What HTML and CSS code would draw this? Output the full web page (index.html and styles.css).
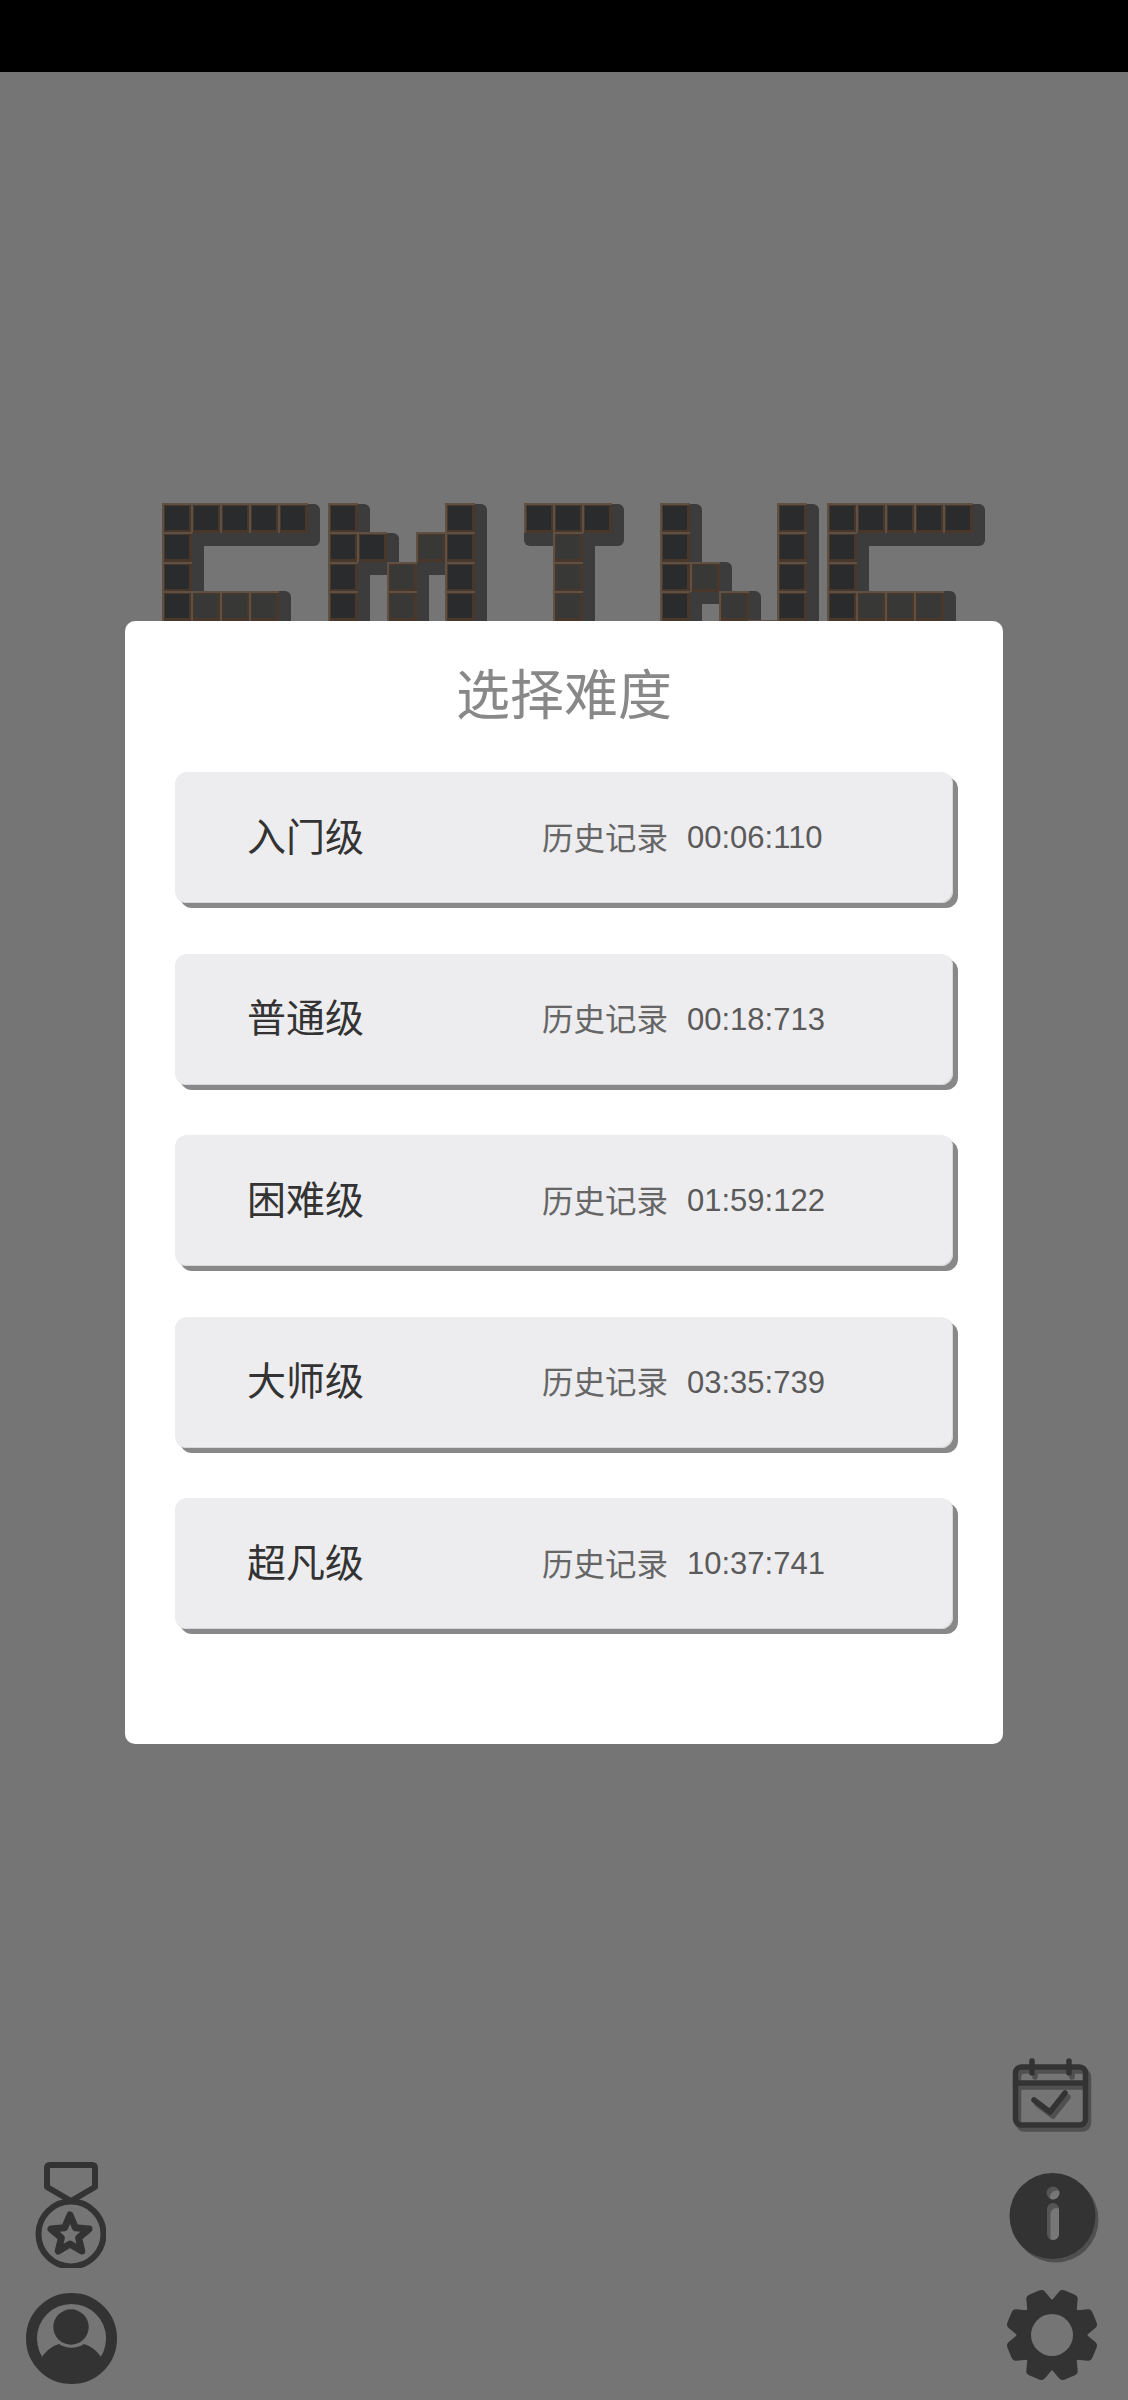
FILE: index.html
```html
<!DOCTYPE html>
<html lang="zh-CN">
<head>
<meta charset="utf-8">
<title>选择难度</title>
<link rel="stylesheet" href="styles.css">
</head>
<body>
<div class="status"></div>
<main class="stage">
  <svg class="logo" width="1128" height="560" viewBox="0 72 1128 560">
    <defs>
      <rect id="s" width="42" height="42" rx="6" fill="#3c3c3c"/>
      <g id="t"><rect width="30" height="30" fill="#48372a"/><path d="M0 0h30v2H2v28H0z" fill="#5f5044"/><rect x="3" y="3" width="24" height="24" fill="#2a2b2d"/></g>
      <g id="l"><rect width="30" height="30" fill="#48372a"/><path d="M0 0h30v2H2v28H0z" fill="#5f5044"/><rect x="3" y="3" width="24" height="24" fill="#383837"/></g>
    </defs>
    <g>
      <use href="#s" x="162" y="504"/><use href="#s" x="191" y="504"/><use href="#s" x="220" y="504"/><use href="#s" x="249" y="504"/><use href="#s" x="278" y="504"/>
      <use href="#s" x="162" y="533"/><use href="#s" x="162" y="562"/><use href="#s" x="162" y="591"/><use href="#s" x="191" y="591"/><use href="#s" x="220" y="591"/><use href="#s" x="249" y="591"/>
      <use href="#s" x="328" y="504"/><use href="#s" x="328" y="533"/><use href="#s" x="328" y="562"/><use href="#s" x="328" y="591"/>
      <use href="#s" x="357" y="533"/><use href="#s" x="387" y="562"/><use href="#s" x="387" y="591"/><use href="#s" x="416" y="533"/>
      <use href="#s" x="445" y="504"/><use href="#s" x="445" y="533"/><use href="#s" x="445" y="562"/><use href="#s" x="445" y="591"/>
      <use href="#s" x="524" y="504"/><use href="#s" x="553" y="504"/><use href="#s" x="582" y="504"/><use href="#s" x="553" y="533"/><use href="#s" x="553" y="562"/><use href="#s" x="553" y="591"/>
      <use href="#s" x="660" y="504"/><use href="#s" x="660" y="533"/><use href="#s" x="660" y="562"/><use href="#s" x="660" y="591"/><use href="#s" x="690" y="562"/><use href="#s" x="719" y="591"/>
      <use href="#s" x="777" y="504"/><use href="#s" x="777" y="533"/><use href="#s" x="777" y="562"/><use href="#s" x="777" y="591"/>
      <use href="#s" x="827" y="504"/><use href="#s" x="856" y="504"/><use href="#s" x="885" y="504"/><use href="#s" x="914" y="504"/><use href="#s" x="943" y="504"/>
      <use href="#s" x="827" y="533"/><use href="#s" x="827" y="562"/><use href="#s" x="827" y="591"/><use href="#s" x="856" y="591"/><use href="#s" x="885" y="591"/><use href="#s" x="914" y="591"/>
    </g>
    <g class="tiles">
      <use href="#t" x="162" y="503"/><use href="#t" x="191" y="503"/><use href="#t" x="220" y="503"/><use href="#t" x="249" y="503"/><use href="#t" x="278" y="503"/>
      <use href="#t" x="162" y="532"/><use href="#t" x="162" y="562"/><use href="#t" x="162" y="591"/><use href="#l" x="191" y="591"/><use href="#l" x="220" y="591"/><use href="#l" x="249" y="591"/>
      <use href="#t" x="328" y="503"/><use href="#t" x="328" y="532"/><use href="#t" x="328" y="562"/><use href="#t" x="328" y="591"/>
      <use href="#t" x="357" y="532"/><use href="#l" x="387" y="562"/><use href="#l" x="387" y="591"/><use href="#l" x="416" y="532"/>
      <use href="#t" x="445" y="503"/><use href="#t" x="445" y="532"/><use href="#t" x="445" y="562"/><use href="#t" x="445" y="591"/>
      <use href="#t" x="524" y="503"/><use href="#t" x="553" y="503"/><use href="#t" x="582" y="503"/><use href="#l" x="553" y="532"/><use href="#l" x="553" y="562"/><use href="#l" x="553" y="591"/>
      <use href="#t" x="660" y="503"/><use href="#t" x="660" y="532"/><use href="#t" x="660" y="562"/><use href="#t" x="660" y="591"/><use href="#l" x="690" y="562"/><use href="#l" x="719" y="591"/><use href="#l" x="748" y="620"/>
      <use href="#t" x="777" y="503"/><use href="#t" x="777" y="532"/><use href="#t" x="777" y="562"/><use href="#t" x="777" y="591"/>
      <use href="#t" x="827" y="503"/><use href="#t" x="856" y="503"/><use href="#t" x="885" y="503"/><use href="#t" x="914" y="503"/><use href="#t" x="943" y="503"/>
      <use href="#t" x="827" y="532"/><use href="#t" x="827" y="562"/><use href="#t" x="827" y="591"/><use href="#l" x="856" y="591"/><use href="#l" x="885" y="591"/><use href="#l" x="914" y="591"/>
    </g>
  </svg>

  <section class="modal">
    <h1 class="title">选择难度</h1>
    <div class="levels">
      <div class="level"><span class="name">入门级</span><span class="rec">历史记录</span><span class="time">00:06:110</span></div>
      <div class="level"><span class="name">普通级</span><span class="rec">历史记录</span><span class="time">00:18:713</span></div>
      <div class="level"><span class="name">困难级</span><span class="rec">历史记录</span><span class="time">01:59:122</span></div>
      <div class="level"><span class="name">大师级</span><span class="rec">历史记录</span><span class="time">03:35:739</span></div>
      <div class="level"><span class="name">超凡级</span><span class="rec">历史记录</span><span class="time">10:37:741</span></div>
    </div>
  </section>

  <svg class="ico medal" width="72" height="108" viewBox="0 0 72 108" fill="none" stroke="#333" stroke-linejoin="round">
    <path d="M16 5h42q3 0 3 3v19L37 41 13 27V8q0-3 3-3z" stroke-width="6"/>
    <circle cx="37" cy="74" r="32.500" stroke-width="6"/>
    <path d="M36 55l5.300 12.700L55 69l-10.400 8.800 3.200 13.200L36 84l-11.800 7 3.200-13.200L17 69l13.700-1.300z" stroke-width="7"/>
  </svg>
  <svg class="ico user" width="92" height="92" viewBox="0 0 92 92">
    <circle cx="46.500" cy="46.500" r="40" fill="none" stroke="#333" stroke-width="11"/>
    <circle cx="46" cy="35" r="17.700" fill="#333"/>
    <path d="M17 65c4-6 10-11 17-13 8 5 17 5 25 0 7 2 13 7 17 13-6 14-17 21-30 21s-23-7-29-21z" fill="#333"/>
  </svg>
  <svg class="ico cal" width="82" height="76" viewBox="0 0 82 76" fill="none" stroke-linecap="round" stroke-linejoin="round">
    <g stroke="#505050" stroke-width="5.500" transform="translate(3 4)">
      <rect x="4.500" y="9" width="70" height="58" rx="6"/><path d="M4.500 25h70M21 6v9M58 6v9"/>
      <path d="M23 42l16 12 15-19"/>
    </g>
    <g stroke="#333" stroke-width="5.500">
      <rect x="4.500" y="9" width="70" height="58" rx="6"/><path d="M4.500 25h70M21 3v12M58 3v12"/>
      <path d="M23 42l16 12 15-19"/>
    </g>
  </svg>
  <svg class="ico info" width="96" height="92" viewBox="0 0 96 92">
    <defs>
      <clipPath id="idot"><circle cx="47" cy="21" r="6.500"/></clipPath>
      <clipPath id="istem"><rect x="41" y="31" width="12" height="37" rx="6"/></clipPath>
    </defs>
    <circle cx="49.500" cy="47.500" r="43" fill="#4f4f4f"/>
    <circle cx="46.500" cy="44" r="43" fill="#333"/>
    <circle cx="47" cy="21" r="6.500" fill="#555"/>
    <circle cx="50.500" cy="25" r="6.500" fill="#777" clip-path="url(#idot)"/>
    <rect x="41" y="31" width="12" height="37" rx="6" fill="#555"/>
    <rect x="44.500" y="36" width="12" height="37" rx="6" fill="#777" clip-path="url(#istem)"/>
  </svg>
  <svg class="ico gear" width="94" height="94" viewBox="-47 -47 94 94">
    <defs><path id="tooth" d="M-14-30L-10-43Q-9-46-5-46H5Q9-46 10-43L14-30Z" fill="#333"/></defs>
    <circle r="35.500" fill="#333"/>
    <use href="#tooth" transform="rotate(22.500)"/><use href="#tooth" transform="rotate(67.500)"/>
    <use href="#tooth" transform="rotate(112.500)"/><use href="#tooth" transform="rotate(157.500)"/>
    <use href="#tooth" transform="rotate(202.500)"/><use href="#tooth" transform="rotate(247.500)"/>
    <use href="#tooth" transform="rotate(292.500)"/><use href="#tooth" transform="rotate(337.500)"/>
    <circle r="21" fill="#757575"/>
  </svg>
</main>
</body>
</html>
```

FILE: styles.css
```css
* { box-sizing: border-box; }
html, body { margin: 0; padding: 0; }
body {
  width: 1128px;
  height: 2400px;
  overflow: hidden;
  background: #757575;
  font-family: "Noto Sans CJK SC", "Noto Sans", sans-serif;
}
.status { height: 72px; background: #000; }
.stage { position: relative; height: 2328px; }
.logo { position: absolute; left: 0; top: 0; }
.tiles { filter: blur(0.5px); }
.modal {
  position: absolute;
  left: 125px;
  top: 549px;
  width: 878px;
  height: 1123px;
  background: #fff;
  border-radius: 10px;
  padding: 0 50px;
}
.title {
  margin: 0;
  padding-top: 36px;
  height: 151px;
  text-align: center;
  font-weight: 400;
  font-size: 54px;
  line-height: 70px;
  color: #888;
}
.levels { display: flex; flex-direction: column; gap: 50.500px; }
.level {
  display: flex;
  align-items: center;
  width: 778px;
  height: 131px;
  padding-left: 72px;
  padding-bottom: 2px;
  background: #ededef;
  border-radius: 12px;
  box-shadow: inset -1px -1px 0 #d8d8d8, 5px 5px 0 #888;
}
.name { width: 294px; font-size: 39px; line-height: 50px; color: #333; margin-top: -6px; }
.rec { width: 145px; padding-left: 1px; font-size: 31.500px; line-height: 40px; color: #666; margin-top: -2px; }
.time { font-family: "Liberation Sans", Arial, sans-serif; font-size: 31px; line-height: 40px; color: #5a5a5a; margin-top: 3px; margin-left: 1px; }
.ico { position: absolute; }
.medal { left: 34px; top: 2088px; }
.user { left: 25px; top: 2220px; }
.cal { left: 1011px; top: 1986px; }
.info { left: 1006px; top: 2100px; }
.gear { left: 1005px; top: 2216px; }
```
